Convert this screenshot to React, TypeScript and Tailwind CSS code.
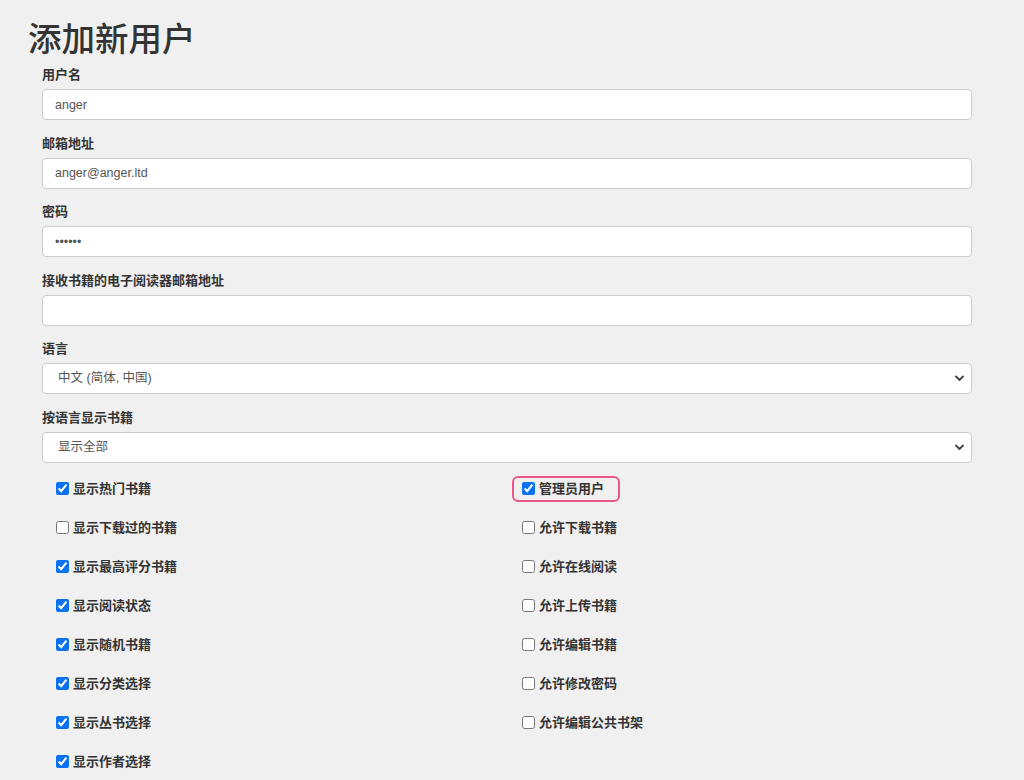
import React from "react";

const FONT = { fontFamily: '"Liberation Sans", "Noto Sans CJK SC", sans-serif' };

const leftChecks: [string, boolean][] = [
  ["显示热门书籍", true],
  ["显示下载过的书籍", false],
  ["显示最高评分书籍", true],
  ["显示阅读状态", true],
  ["显示随机书籍", true],
  ["显示分类选择", true],
  ["显示丛书选择", true],
  ["显示作者选择", true],
];

const rightChecks: [string, boolean][] = [
  ["管理员用户", true],
  ["允许下载书籍", false],
  ["允许在线阅读", false],
  ["允许上传书籍", false],
  ["允许编辑书籍", false],
  ["允许修改密码", false],
  ["允许编辑公共书架", false],
];

function Field({ label, children }: { label: string; children: React.ReactNode }) {
  return (
    <div className="mb-[13.5px]">
      <label className="mb-[5px] block h-[19px] text-[13px] font-bold leading-[19px] text-[#333]">{label}</label>
      {children}
    </div>
  );
}

const inputCls =
  "block h-[31px] w-full rounded-[4px] border border-[#cccccc] bg-white px-[12px] text-[12.5px] text-[#555] outline-none";

function Select({ value }: { value: string }) {
  return (
    <div className="relative">
      <select className={inputCls + " appearance-none pl-[15px]"} defaultValue={value}>
        <option>{value}</option>
      </select>
      <svg
        className="pointer-events-none absolute right-[8px] top-[12px]"
        width="9"
        height="7"
        viewBox="0 0 9 7"
        fill="none"
      >
        <path d="M1 1.5 4.5 5 8 1.5" stroke="#444" strokeWidth="1.8" strokeLinecap="round" strokeLinejoin="round" />
      </svg>
    </div>
  );
}

function Check({ label, checked }: { label: string; checked: boolean }) {
  return (
    <label className="flex items-center gap-[4px] text-[13px] font-bold leading-[19px] text-[#333]">
      <input type="checkbox" defaultChecked={checked} className="m-0 h-[13px] w-[13px] accent-[#0a72f0]" />
      <span>{label}</span>
    </label>
  );
}

export default function App() {
  return (
    <div className="min-h-screen bg-[#f0f0f0] pl-[28px] pt-[20px]" style={FONT}>
      <h1 className="h-[40px] text-[33.5px] font-medium leading-[40px] text-[#333]">添加新用户</h1>
      <form className="ml-[14px] mt-[5px] w-[930px]">
        <Field label="用户名">
          <input className={inputCls} defaultValue="anger" />
        </Field>
        <Field label="邮箱地址">
          <input className={inputCls} defaultValue="anger@anger.ltd" />
        </Field>
        <Field label="密码">
          <input type="password" className={inputCls} defaultValue="123456" />
        </Field>
        <Field label="接收书籍的电子阅读器邮箱地址">
          <input className={inputCls} defaultValue="" />
        </Field>
        <Field label="语言">
          <Select value="中文 (简体, 中国)" />
        </Field>
        <Field label="按语言显示书籍">
          <Select value="显示全部" />
        </Field>

        <div className="-mt-[7px] grid grid-cols-2">
          <div className="flex flex-col px-[14px]">
            {leftChecks.map(([l, c]) => (
              <div key={l} className="flex h-[39px] items-center">
                <Check label={l} checked={c} />
              </div>
            ))}
          </div>
          <div className="flex flex-col px-[15px]">
            {rightChecks.map(([l, c], i) => (
              <div key={l} className="flex h-[39px] items-center">
                {i === 0 ? (
                  <div className="-ml-[10px] flex h-[26px] items-center rounded-[6px] border-2 border-[#e9578b] pl-[8px] pr-[14px]">
                    <Check label={l} checked={c} />
                  </div>
                ) : (
                  <Check label={l} checked={c} />
                )}
              </div>
            ))}
          </div>
        </div>
      </form>
    </div>
  );
}
